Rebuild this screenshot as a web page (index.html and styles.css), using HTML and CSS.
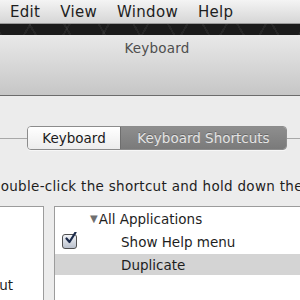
FILE: index.html
```
<!DOCTYPE html>
<html lang="en">
<head>
  <meta charset="UTF-8" />
  <title>Keyboard</title>
  <link rel="stylesheet" href="styles.css">
</head>
<body>
  <div class="menubar">
    <span class="menu-item">Edit</span>
    <span class="menu-item">View</span>
    <span class="menu-item">Window</span>
    <span class="menu-item">Help</span>
  </div>
  <div class="desktop-strip"></div>

  <div class="window">
    <div class="titlebar">Keyboard</div>

    <div class="content">
      <div class="tabs-row">
        <div class="rule rule-left"></div>
        <div class="segmented">
          <span class="segment">Keyboard</span>
          <span class="segment active">Keyboard Shortcuts</span>
        </div>
        <div class="rule"></div>
      </div>

      <p class="hint">Double-click the shortcut and hold down the new keys.</p>

      <div class="panels">
        <div class="panel panel-left">
          <div class="category">Keyboard &amp; Text Input</div>
        </div>
        <div class="panel panel-right">
          <div class="row group">
            <span class="disclosure">▼</span>All Applications
          </div>
          <div class="row">
            <span class="checkbox">
              <svg width="13" height="13" viewBox="0 0 13 13">
                <path d="M2.5 6.5 L5.5 10 L11.5 0.5" fill="none" stroke="#1b2a4a" stroke-width="2.2" stroke-linecap="round" stroke-linejoin="round"/>
              </svg>
            </span>
            <span class="label">Show Help menu</span>
          </div>
          <div class="row selected">
            <span class="label">Duplicate</span>
          </div>
        </div>
      </div>
    </div>
  </div>
</body>
</html>
```

FILE: styles.css
```
* {
  box-sizing: border-box;
}

body {
  margin: 0;
  width: 300px;
  height: 300px;
  overflow: hidden;
  font-family: "DejaVu Sans", sans-serif;
  background: #ececec;
  color: #222;
}

.menubar {
  height: 24px;
  display: flex;
  align-items: center;
  padding-left: 10px;
  gap: 20px;
  font-size: 15px;
  letter-spacing: 0.3px;
  color: #1e1e1e;
  background: linear-gradient(#f4f4f4, #d6d6d6);
  border-bottom: 1px solid #9a9a9a;
}

.desktop-strip {
  height: 11px;
  background:
    repeating-linear-gradient(60deg, rgba(255,255,255,0.05) 0 2px, transparent 2px 30px),
    repeating-linear-gradient(-60deg, rgba(255,255,255,0.05) 0 2px, transparent 2px 34px),
    #1b1b1b;
}

.titlebar {
  height: 61px;
  padding-top: 5px;
  text-align: center;
  font-size: 13.5px;
  letter-spacing: 0.2px;
  color: #4e4e4e;
  padding-left: 14px;
  background: linear-gradient(#e9e9e9, #c6c6c6);
  border-bottom: 1px solid #6c6c6c;
}

.content {
  padding-top: 30px;
}

.tabs-row {
  display: flex;
  align-items: center;
}

.rule {
  flex: 1;
  height: 1px;
  background: #a8a8a8;
}

.rule-left {
  flex: none;
  width: 27px;
}

.segmented {
  display: flex;
  height: 24px;
  border: 1px solid #8c8c8c;
  border-radius: 4px;
  overflow: hidden;
  font-size: 13.5px;
  box-shadow: 0 1px 0 rgba(255,255,255,0.6);
}

.segment {
  display: flex;
  align-items: center;
  justify-content: center;
  width: 92px;
  background: linear-gradient(#ffffff, #ececec);
  color: #1a1a1a;
}

.segment.active {
  width: 166px;
  background: linear-gradient(#8e8e8e, #7a7a7a);
  color: #e4e4e4;
  border-left: 1px solid #6e6e6e;
  text-shadow: 0 -1px 0 rgba(0,0,0,0.25);
}

.hint {
  margin: 28px 0 0 -10px;
  font-size: 13.5px;
  letter-spacing: 0.3px;
  line-height: 16px;
  white-space: nowrap;
  color: #1e1e1e;
}

.panels {
  display: flex;
  gap: 10px;
  margin-top: 12px;
}

.panel {
  height: 120px;
  background: #fff;
  border: 1px solid #9c9c9c;
}

.panel-left {
  flex: none;
  width: 44px;
  border-left: none;
  overflow: hidden;
}

.category {
  display: flex;
  justify-content: flex-end;
  white-space: nowrap;
  padding-right: 30px;
  margin-top: 70px;
  font-size: 13.5px;
  color: #1e1e1e;
}

.panel-right {
  flex: 1;
  border-right: none;
}

.row {
  height: 23px;
  display: flex;
  align-items: center;
  font-size: 13.5px;
  color: #1e1e1e;
  white-space: nowrap;
}

.group {
  padding-left: 35px;
}

.disclosure {
  font-size: 10px;
  color: #6f6f6f;
  margin-right: 1px;
}

.checkbox {
  width: 15px;
  height: 15px;
  margin-left: 7px;
  border: 1px solid #505050;
  border-radius: 3px;
  background: linear-gradient(#f2f4f8, #b9c0cc);
  position: relative;
}

.checkbox svg {
  position: absolute;
  left: 1px;
  top: -3px;
}

.row .label {
  margin-left: 66px;
}

.checkbox + .label {
  margin-left: 44px;
}

.row.selected {
  background: #d4d4d4;
  height: 21px;
  margin-top: 1px;
}
```
